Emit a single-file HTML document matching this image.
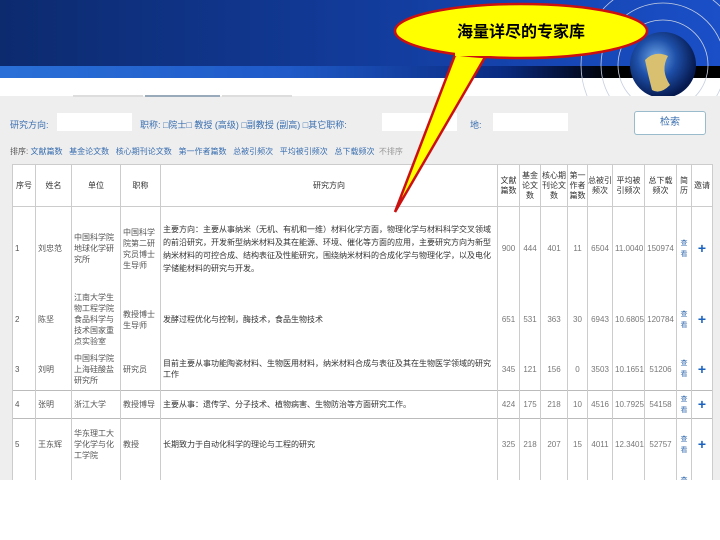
<!DOCTYPE html>
<html><head><meta charset="utf-8"><style>
*{margin:0;padding:0;box-sizing:border-box}
body{width:720px;height:540px;background:#fff;position:relative;overflow:hidden;font-family:"Liberation Sans","Noto Sans CJK SC",sans-serif}
.hdr{position:absolute;left:0;top:0;width:720px;height:66px;background:linear-gradient(90deg,#0c2a6e 0%,#123b9a 50%,#1a4fc8 100%)}
.stripe{position:absolute;left:0;top:66px;width:720px;height:12px;background:linear-gradient(90deg,#2a6fd8 0%,#1f5ac8 40%,#0a2a80 70%,#000 85%)}
.grey{position:absolute;left:0;top:96px;width:720px;height:384px;background:#eeeeee}
.tab{position:absolute;top:95px;height:2px;background:#9ab}
.lbl{position:absolute;font-size:9px;color:#3a6fb0;white-space:nowrap}
.inp{position:absolute;background:#fff;height:18px}
table{position:absolute;left:12px;top:164px;width:700px;border-collapse:collapse;background:#fff;font-size:8px;color:#555;table-layout:fixed}
td{border-left:1px solid #ccc;border-right:1px solid #ccc;padding:0 2px;vertical-align:middle;line-height:11px;overflow:hidden}
tr.b td{border-top:1px solid #bbb}
th{border:1px solid #ccc;font-weight:normal;font-size:8px;color:#333;line-height:10px;overflow:hidden}
.plus{color:#1a62c0;font-weight:bold;font-size:14px;text-align:center}
.lk{color:#3a6fb0;font-size:7px;text-align:center}
.n{text-align:center;color:#777}
.r1 td:nth-child(5){line-height:13px}
</style></head><body>
<div class="hdr"></div><div class="stripe"></div>
<div class="grey"></div>
<div class="tab" style="left:73px;width:70px;background:#ddd"></div>
<div class="tab" style="left:145px;width:75px"></div>
<div class="tab" style="left:222px;width:70px;background:#ddd"></div>
<div class="lbl" style="left:10px;top:118px">研究方向:</div>
<div class="inp" style="left:57px;top:113px;width:75px"></div>
<div class="lbl" style="left:140px;top:118px">职称: □院士□ 教授 (高级) □副教授 (副高) □其它职称:</div>
<div class="inp" style="left:382px;top:113px;width:75px"></div>
<div class="lbl" style="left:470px;top:118px">地:</div>
<div class="inp" style="left:493px;top:113px;width:75px"></div>
<div style="position:absolute;left:634px;top:111px;width:72px;height:24px;background:#fff;border:1px solid #9bc;border-radius:3px;font-size:10px;color:#3a6fb0;text-align:center;line-height:22px">检索</div>
<div class="lbl" style="left:10px;top:146px;color:#555;font-size:8px">排序: <span style="color:#3a6fb0">文献篇数 &nbsp; 基金论文数 &nbsp; 核心期刊论文数 &nbsp; 第一作者篇数 &nbsp; 总被引频次 &nbsp; 平均被引频次 &nbsp; 总下载频次</span> &nbsp;<span style="color:#999">不排序</span></div>
<table>
<colgroup><col style="width:23px"><col style="width:36px"><col style="width:49px"><col style="width:40px"><col style="width:337px"><col style="width:22px"><col style="width:21px"><col style="width:27px"><col style="width:20px"><col style="width:25px"><col style="width:32px"><col style="width:32px"><col style="width:15px"><col style="width:21px"></colgroup>
<tr style="height:42px"><th>序号</th><th>姓名</th><th>单位</th><th>职称</th><th>研究方向</th><th>文献篇数</th><th>基金论文数</th><th>核心期刊论文数</th><th>第一作者篇数</th><th>总被引频次</th><th>平均被引频次</th><th>总下载频次</th><th>简历</th><th>邀请</th></tr>
<tr class="r1" style="height:84px"><td>1</td><td>刘忠范</td><td>中国科学院地球化学研究所</td><td>中国科学院第二研究员博士生导师</td><td style="color:#333">主要方向：主要从事纳米（无机、有机和一维）材料化学方面，物理化学与材料科学交叉领域的前沿研究，开发新型纳米材料及其在能源、环境、催化等方面的应用，主要研究方向为新型纳米材料的可控合成、结构表征及性能研究，围绕纳米材料的合成化学与物理化学，以及电化学储能材料的研究与开发。</td><td class="n">900</td><td class="n">444</td><td class="n">401</td><td class="n">11</td><td class="n">6504</td><td class="n">11.0040</td><td class="n">150974</td><td class="lk">查看</td><td class="plus">+</td></tr>
<tr style="height:58px"><td>2</td><td>陈坚</td><td>江南大学生物工程学院食品科学与技术国家重点实验室</td><td>教授博士生导师</td><td style="color:#333">发酵过程优化与控制，酶技术，食品生物技术</td><td class="n">651</td><td class="n">531</td><td class="n">363</td><td class="n">30</td><td class="n">6943</td><td class="n">10.6805</td><td class="n">120784</td><td class="lk">查看</td><td class="plus">+</td></tr>
<tr style="height:42px"><td>3</td><td>刘明</td><td>中国科学院上海硅酸盐研究所</td><td>研究员</td><td style="color:#333">目前主要从事功能陶瓷材料、生物医用材料，纳米材料合成与表征及其在生物医学领域的研究工作</td><td class="n">345</td><td class="n">121</td><td class="n">156</td><td class="n">0</td><td class="n">3503</td><td class="n">10.1651</td><td class="n">51206</td><td class="lk">查看</td><td class="plus">+</td></tr>
<tr class="b" style="height:28px"><td>4</td><td>张明</td><td>浙江大学</td><td>教授博导</td><td style="color:#333">主要从事：遗传学、分子技术、植物病害、生物防治等方面研究工作。</td><td class="n">424</td><td class="n">175</td><td class="n">218</td><td class="n">10</td><td class="n">4516</td><td class="n">10.7925</td><td class="n">54158</td><td class="lk">查看</td><td class="plus">+</td></tr>
<tr class="b" style="height:52px"><td>5</td><td>王东辉</td><td>华东理工大学化学与化工学院</td><td>教授</td><td style="color:#333">长期致力于自动化科学的理论与工程的研究</td><td class="n">325</td><td class="n">218</td><td class="n">207</td><td class="n">15</td><td class="n">4011</td><td class="n">12.3401</td><td class="n">52757</td><td class="lk">查看</td><td class="plus">+</td></tr>
<tr style="height:30px"><td></td><td></td><td>清华大学</td><td></td><td></td><td></td><td></td><td></td><td></td><td></td><td></td><td></td><td class="lk">查看</td><td></td></tr>
</table>
<div style="position:absolute;left:0;top:480px;width:720px;height:60px;background:#fff"></div>
<svg width="720" height="540" style="position:absolute;left:0;top:0">
<defs><radialGradient id="g" cx="40%" cy="40%" r="60%"><stop offset="0" stop-color="#6fa8e8"/><stop offset=".5" stop-color="#1e4fa8"/><stop offset="1" stop-color="#061a50"/></radialGradient>
<clipPath id="c"><rect x="0" y="0" width="720" height="96"/></clipPath></defs>
<g clip-path="url(#c)" fill="none" stroke="#c8d0e0" stroke-width="0.8">
<circle cx="663" cy="65" r="45"/><circle cx="663" cy="65" r="62"/><circle cx="663" cy="65" r="82"/>
<circle cx="663" cy="65" r="33" fill="url(#g)" stroke="none"/>
<path d="M645 60 Q655 50 668 56 Q660 70 670 85 Q660 95 652 90 Q648 75 645 60Z" fill="#d8c070" stroke="none"/>
</g>
<path d="M488 52 L395 212 L455 55 Z" fill="#ffff00" stroke="#cc1010" stroke-width="2.5"/>
<ellipse cx="521" cy="31" rx="126" ry="27" fill="#ffff00" stroke="#cc1010" stroke-width="2.5"/>
<rect x="455" y="50" width="35" height="6" fill="#ffff00"/>
<text x="521" y="37" text-anchor="middle" font-size="16" font-weight="bold" font-family="Liberation Sans,Noto Sans CJK SC,sans-serif" fill="#000">海量详尽的专家库</text>
</svg>
</body></html>
